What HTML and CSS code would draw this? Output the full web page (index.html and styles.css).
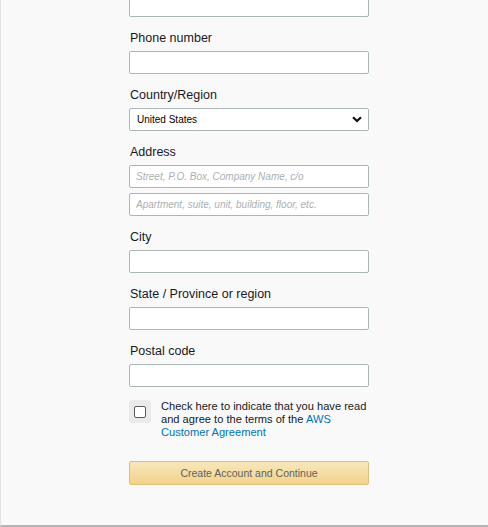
FILE: index.html
```html
<!DOCTYPE html>
<html>
<head>
<meta charset="utf-8">
<link rel="stylesheet" href="styles.css">
</head>
<body>
<div class="page">
  <form class="form">
    <input class="field" type="text">
    <label class="label">Phone number</label>
    <input class="field" type="text">
    <label class="label">Country/Region</label>
    <div class="select">
      <span class="select-text">United States</span>
      <svg class="chev" width="10" height="7" viewBox="0 0 10 7"><path d="M1 1.2 L5 5 L9 1.2" fill="none" stroke="#111" stroke-width="2.2"/></svg>
    </div>
    <label class="label">Address</label>
    <input class="field" type="text" placeholder="Street, P.O. Box, Company Name, c/o">
    <input class="field field-second" type="text" placeholder="Apartment, suite, unit, building, floor, etc.">
    <label class="label">City</label>
    <input class="field" type="text">
    <label class="label">State / Province or region</label>
    <input class="field" type="text">
    <label class="label">Postal code</label>
    <input class="field" type="text">
    <div class="agree">
      <div class="check-wrap"><span class="check"></span></div>
      <p class="agree-text">Check here to indicate that you have read and agree to the terms of the <a class="link" href="#">AWS Customer Agreement</a></p>
    </div>
    <button class="btn" type="button">Create Account and Continue</button>
  </form>
</div>
</body>
</html>
```
FILE: styles.css
```css
html, body {
  margin: 0;
  padding: 0;
}
body {
  background: #f9f9f9;
  font-family: "Liberation Sans", Arial, sans-serif;
  color: #16191f;
}
.page {
  box-sizing: border-box;
  height: 527px;
  overflow: hidden;
  border-left: 1px solid #e3e3e3;
  border-bottom: 2px solid #b5b5b5;
  display: flex;
  justify-content: flex-start;
}
.form {
  width: 240px;
  margin-left: 128px;
  margin-top: -6px;
  display: flex;
  flex-direction: column;
}
.field {
  box-sizing: border-box;
  width: 240px;
  height: 23px;
  margin: 0;
  padding: 0 6px;
  border: 1px solid #aab7b8;
  border-radius: 2px;
  background: #fff;
  font-family: "Liberation Sans", Arial, sans-serif;
  font-size: 10px;
  outline: none;
}
.field::placeholder {
  color: #aab0b3;
  font-style: italic;
}
.field-second {
  margin-top: 5px;
}
.label {
  display: block;
  margin: 13px 0 5px 1px;
  font-size: 12.5px;
  line-height: 16px;
  color: #16191f;
}
.select {
  box-sizing: border-box;
  width: 240px;
  height: 23px;
  border: 1px solid #aab7b8;
  border-radius: 2px;
  background: #fff;
  display: flex;
  align-items: center;
  justify-content: space-between;
  padding: 0 6px 0 7px;
}
.select-text {
  font-size: 10px;
  color: #000;
}
.chev {
  display: block;
}
.agree {
  display: flex;
  align-items: flex-start;
  margin-top: 13px;
  gap: 10px;
}
.check-wrap {
  flex: none;
  width: 22px;
  height: 23px;
  border-radius: 3px;
  background: #e9ebeb;
  display: flex;
  align-items: center;
  justify-content: center;
}
.check {
  box-sizing: border-box;
  width: 12px;
  height: 12px;
  border: 1.5px solid #5a5a5a;
  border-radius: 2px;
  background: #fff;
}
.agree-text {
  margin: 0;
  font-size: 11.1px;
  line-height: 13px;
  color: #16191f;
}
.link {
  color: #0073bb;
  text-decoration: none;
}
.btn {
  box-sizing: border-box;
  margin-top: 22px;
  width: 240px;
  height: 24px;
  border: 1px solid #dcc07a;
  border-radius: 2px;
  background: linear-gradient(to bottom, #f8e7bc, #f2d38a);
  font-family: "Liberation Sans", Arial, sans-serif;
  font-size: 10.5px;
  color: #5f5f5f;
  padding: 0;
}
```
